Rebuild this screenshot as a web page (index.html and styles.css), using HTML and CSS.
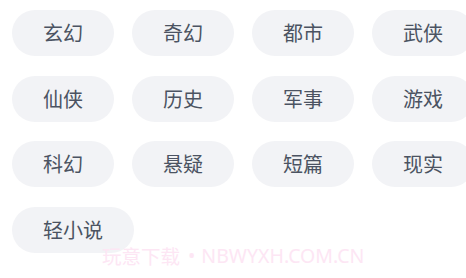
FILE: index.html
```html
<!DOCTYPE html>
<html lang="zh">
<head>
<meta charset="utf-8">
<link rel="stylesheet" href="styles.css">
</head>
<body>
<div class="tags">
  <span class="tag">玄幻</span>
  <span class="tag">奇幻</span>
  <span class="tag">都市</span>
  <span class="tag">武侠</span>
  <span class="tag">仙侠</span>
  <span class="tag">历史</span>
  <span class="tag">军事</span>
  <span class="tag">游戏</span>
  <span class="tag">科幻</span>
  <span class="tag">悬疑</span>
  <span class="tag">短篇</span>
  <span class="tag">现实</span>
  <span class="tag">轻小说</span>
</div>
<div class="watermark"><span class="wm-cn">玩意下载</span><span class="wm-dot">•</span><span class="wm-en">NBWYXH.COM.CN</span></div>
</body>
</html>
```
FILE: styles.css
```css
html, body {
  margin: 0;
  padding: 0;
  background: #ffffff;
  overflow: hidden;
}
body {
  position: relative;
  width: 466px;
  height: 278px;
  font-family: "Noto Sans CJK SC", "Noto Sans", sans-serif;
}
.tags {
  display: flex;
  flex-wrap: wrap;
  width: 480px;
  padding: 10px 0 0 12px;
  column-gap: 18px;
  row-gap: 19.5px;
}
.tag {
  display: flex;
  align-items: center;
  justify-content: center;
  height: 46px;
  padding: 0 31px;
  border-radius: 23px;
  background: #f2f3f6;
  color: #4b5362;
  font-size: 20px;
  line-height: 1;
  white-space: nowrap;
}
.watermark {
  position: absolute;
  left: 102px;
  top: 245px;
  display: flex;
  align-items: center;
  font-size: 19.5px;
  line-height: 22px;
  color: #fde6f4;
  white-space: nowrap;
}
.wm-dot {
  margin: 0 6px 0 8px;
  font-family: "Noto Sans", sans-serif;
}
.wm-en {
  font-family: "Noto Sans", sans-serif;
}
```
